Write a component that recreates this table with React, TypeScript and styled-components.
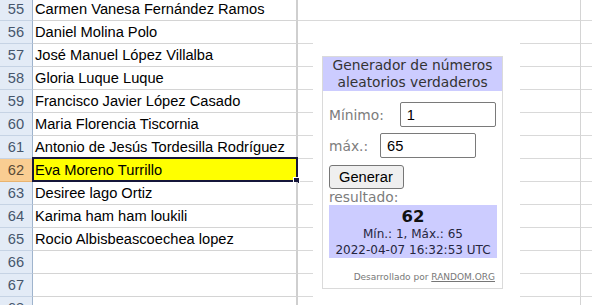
import styled, { createGlobalStyle } from 'styled-components';

const rows = [
  { n: 55, name: 'Carmen Vanesa Fernández Ramos' },
  { n: 56, name: 'Daniel Molina Polo' },
  { n: 57, name: 'José Manuel López Villalba' },
  { n: 58, name: 'Gloria Luque Luque' },
  { n: 59, name: 'Francisco Javier López Casado' },
  { n: 60, name: 'Maria Florencia Tiscornia' },
  { n: 61, name: 'Antonio de Jesús Tordesilla Rodríguez' },
  { n: 62, name: 'Eva Moreno Turrillo' },
  { n: 63, name: 'Desiree lago Ortiz' },
  { n: 64, name: 'Karima ham ham loukili' },
  { n: 65, name: 'Rocio Albisbeascoechea lopez' },
  { n: 66, name: '' },
  { n: 67, name: '' },
  { n: 68, name: '' },
];

const SELECTED = 62;

export default function App() {
  return (
    <>
      <GlobalStyle />
      <Page>
        <Sheet>
          {rows.map((r) => (
            <Row key={r.n}>
              <RowHeader $active={r.n === SELECTED}>{r.n}</RowHeader>
              <NameCell $selected={r.n === SELECTED}>{r.name}</NameCell>
              <WideCell />
              <Cell />
            </Row>
          ))}
        </Sheet>

        <ObjectArea>
          <Widget>
            <WidgetTitle>
              Generador de números
              <br />
              aleatorios verdaderos
            </WidgetTitle>
            <WidgetBody>
              <Field>
                <Label>Mínimo:</Label>
                <NumberInput $gap={16} defaultValue="1" />
              </Field>
              <Field>
                <Label>máx.:</Label>
                <NumberInput $gap={12} defaultValue="65" />
              </Field>
              <Button type="button">Generar</Button>
              <ResultLabel>resultado:</ResultLabel>
              <ResultBox>
                <ResultNumber>62</ResultNumber>
                <ResultLine>Mín.: 1, Máx.: 65</ResultLine>
                <ResultLine>2022-04-07 16:32:53 UTC</ResultLine>
              </ResultBox>
              <Footer>
                Desarrollado por <FooterLink href="#">RANDOM.ORG</FooterLink>
              </Footer>
            </WidgetBody>
          </Widget>
        </ObjectArea>
      </Page>
    </>
  );
}

const GlobalStyle = createGlobalStyle`
  html, body {
    margin: 0;
    padding: 0;
    background: #ffffff;
    overflow: hidden;
  }
  body {
    font-family: "Liberation Sans", Arial, sans-serif;
  }
`;

const Page = styled.div`
  position: relative;
  width: 592px;
  height: 305px;
  overflow: hidden;
  background: #ffffff;
`;

const Sheet = styled.div`
  display: flex;
  flex-direction: column;
  margin-top: -2px;
`;

const Row = styled.div`
  display: flex;
  height: 23px;
`;

const RowHeader = styled.div<{ $active?: boolean }>`
  width: 33px;
  flex: none;
  box-sizing: border-box;
  border-right: 1px solid #9fb4cd;
  border-bottom: 1px solid ${(p) => (p.$active ? '#e9b36f' : '#c6d3e4')};
  background: ${(p) => (p.$active ? '#f9cd92' : '#e3ebf6')};
  color: ${(p) => (p.$active ? '#5a4a36' : '#46566c')};
  font-size: 14.67px;
  line-height: 22px;
  text-align: center;
`;

const NameCell = styled.div<{ $selected?: boolean }>`
  position: relative;
  width: 265px;
  flex: none;
  box-sizing: border-box;
  padding-left: 2px;
  border-right: 2px solid #cfcfcf;
  border-bottom: 1px solid #d4d4d4;
  background: ${(p) => (p.$selected ? '#ffff00' : '#ffffff')};
  color: #000000;
  font-size: 14.67px;
  line-height: 22px;
  white-space: nowrap;

  ${(p) =>
    p.$selected &&
    `
    &::before {
      content: '';
      position: absolute;
      top: -2px;
      left: -1px;
      right: -2px;
      bottom: -1px;
      border: 2px solid #15163a;
      pointer-events: none;
    }
    &::after {
      content: '';
      position: absolute;
      right: -4px;
      bottom: -3px;
      width: 5px;
      height: 5px;
      background: #15163a;
      border: 1px solid #ffffff;
    }
  `}
`;

const Cell = styled.div`
  flex: 1;
  box-sizing: border-box;
  border-bottom: 1px solid #d9d9d9;
`;

const WideCell = styled(Cell)`
  width: 283px;
  flex: none;
  border-right: 1px solid #d4d4d4;
`;

const ObjectArea = styled.div`
  position: absolute;
  left: 313px;
  top: 21px;
  width: 207px;
  bottom: 0;
  background: #ffffff;
  padding: 35px 0 0 9px;
  box-sizing: border-box;
`;

const Widget = styled.div`
  width: 181px;
  box-sizing: border-box;
  border: 1px solid #dadada;
  background: #ffffff;
  font-family: "DejaVu Sans", Verdana, sans-serif;
`;

const WidgetTitle = styled.div`
  background: #ccccff;
  color: #333333;
  font-size: 13.8px;
  line-height: 17px;
  text-align: center;
`;

const WidgetBody = styled.div`
  display: flex;
  flex-direction: column;
  align-items: flex-start;
  padding: 11px 5px 5px 6px;
`;

const Field = styled.div`
  display: flex;
  align-items: center;
  margin-bottom: 6px;
`;

const Label = styled.span`
  color: #7c7c7c;
  font-size: 13.8px;
`;

const NumberInput = styled.input<{ $gap: number }>`
  width: 96px;
  height: 25px;
  box-sizing: border-box;
  margin: 0 0 0 ${(p) => p.$gap}px;
  padding: 0 6px;
  border: 1px solid #7a7a7a;
  border-radius: 2px;
  font-family: "Liberation Sans", Arial, sans-serif;
  font-size: 14.67px;
  color: #000000;
  background: #ffffff;
  outline: none;
`;

const Button = styled.button`
  height: 24px;
  box-sizing: border-box;
  margin-top: 1px;
  padding: 0 10px 0 9px;
  border: 1px solid #767676;
  border-radius: 3px;
  background: #efefef;
  color: #000000;
  font-family: "Liberation Sans", Arial, sans-serif;
  font-size: 14.67px;
  line-height: 20px;
`;

const ResultLabel = styled.div`
  color: #7c7c7c;
  font-size: 13.8px;
  line-height: 16px;
  margin-top: 0;
`;

const ResultBox = styled.div`
  align-self: stretch;
  height: 53px;
  box-sizing: border-box;
  padding-top: 2px;
  background: #ccccff;
  color: #262640;
  text-align: center;
`;

const ResultNumber = styled.div`
  font-size: 16.5px;
  font-weight: bold;
  line-height: 19px;
  color: #111111;
`;

const ResultLine = styled.div`
  font-size: 12px;
  line-height: 16px;
`;

const Footer = styled.div`
  align-self: stretch;
  margin-top: 13px;
  padding-right: 2px;
  color: #777777;
  font-size: 9px;
  line-height: 12px;
  text-align: right;
`;

const FooterLink = styled.a`
  color: #777777;
  text-decoration: underline;
`;
